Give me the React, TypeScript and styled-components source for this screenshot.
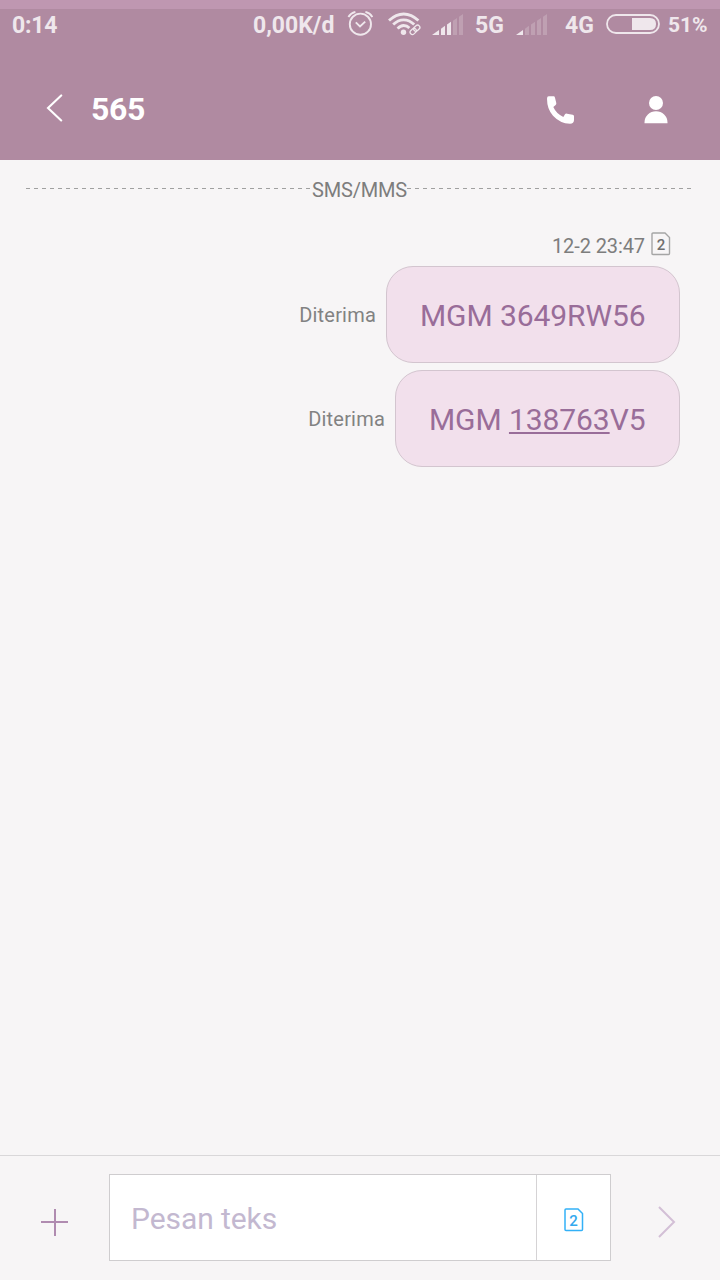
import React from "react";
import styled, { createGlobalStyle } from "styled-components";

const GlobalStyle = createGlobalStyle`
  *, *::before, *::after { box-sizing: border-box; }
  body { margin: 0; background: #f7f5f6; font-family: Roboto, "Liberation Sans", sans-serif; }
  svg { display: block; flex: none; }
`;

const Screen = styled.div`
  width: 720px;
  height: 1280px;
  display: flex;
  flex-direction: column;
  background: #f7f5f6;
  overflow: hidden;
`;

const Header = styled.header`
  height: 160px;
  flex: none;
  background: #b08aa1;
  color: #fff;
`;

const TopStrip = styled.div`
  height: 9px;
  background: #bf97b1;
`;

const StatusBar = styled.div`
  height: 32px;
  display: flex;
  align-items: center;
  color: #efe7ec;
  font-weight: 700;
`;

const StatusText = styled.span<{ $left: number; $width: number; $size?: number; $spacing?: number }>`
  margin-left: ${(p) => p.$left}px;
  width: ${(p) => p.$width}px;
  font-size: ${(p) => p.$size ?? 23}px;
  letter-spacing: ${(p) => p.$spacing ?? 0}px;
  line-height: 30px;
  padding-top: ${(p) => (p.$size ? 0 : 2)}px;
  white-space: nowrap;
  flex: none;
`;

const StatusIcon = styled.span<{ $left: number; $lift?: number }>`
  margin-left: ${(p) => p.$left}px;
  padding-bottom: ${(p) => p.$lift ?? 2}px;
  flex: none;
`;

const TitleBar = styled.div`
  height: 119px;
  display: flex;
  align-items: center;
  padding: 17px 52px 0 46px;
`;

const BackButton = styled.span`
  padding-bottom: 3px;
`;

const Title = styled.h1`
  flex: 1;
  margin: 0 0 0 27px;
  font-size: 32px;
  letter-spacing: -0.3px;
  font-weight: 700;
  line-height: 38px;
`;

const Actions = styled.div`
  display: flex;
  align-items: center;
  gap: 70px;
  padding-top: 1px;
`;

const Conversation = styled.main`
  flex: 1;
  display: flex;
  flex-direction: column;
  padding: 14px 40px 0 26px;
`;

const Divider = styled.div`
  display: flex;
  align-items: center;
  margin-right: -12px;
  height: 28px;
  font-size: 20px;
  line-height: 28px;
  color: #7d7d7d;
`;

const Dashes = styled.span<{ $width: number }>`
  width: ${(p) => p.$width}px;
  height: 1px;
  flex: none;
  background: repeating-linear-gradient(to right, #a0a0a0 0 4px, transparent 4px 8px);
`;

const DividerLabel = styled.span`
  width: 96px;
  text-align: center;
  letter-spacing: -0.2px;
  white-space: nowrap;
  padding: 4px 0 0 1px;
`;

const Stamp = styled.div`
  display: flex;
  justify-content: flex-end;
  align-items: center;
  gap: 6px;
  height: 24px;
  margin: 30px 9px 10px 0;
  font-size: 20px;
  letter-spacing: -0.1px;
  line-height: 24px;
  color: #7d7d7d;
`;

const StampTime = styled.span`
  padding-top: 4px;
`;

const MessageRow = styled.div`
  display: flex;
  justify-content: flex-end;
  align-items: center;
  margin-bottom: 7px;
`;

const Delivery = styled.span`
  font-size: 20px;
  letter-spacing: 0.2px;
  color: #828282;
  margin-right: 10px;
  padding-top: 1px;
`;

const Bubble = styled.div<{ $width: number }>`
  width: ${(p) => p.$width}px;
  height: 97px;
  border: 1px solid #d3c5cf;
  border-radius: 27px;
  background: #f2e0ec;
  color: #996d99;
  display: flex;
  align-items: center;
  padding: 2px 0 0 33px;
  font-size: 30px;
  letter-spacing: -0.08px;
  white-space: pre;
`;

const NumberLink = styled.span`
  text-decoration: underline;
  text-decoration-thickness: 2px;
  text-underline-offset: 2px;
  text-decoration-skip-ink: none;
`;

const Composer = styled.footer`
  height: 125px;
  flex: none;
  display: flex;
  align-items: flex-start;
  border-top: 1px solid #d9d7d9;
  padding: 18px 44px 0 41px;
`;

const PlainButton = styled.button`
  border: 0;
  padding: 0;
  background: none;
  color: inherit;
  display: block;
`;

const AddButton = styled(PlainButton)`
  margin-top: 35px;
`;

const SendButton = styled(PlainButton)`
  margin: 32px 0 0 auto;
`;

const Field = styled.div`
  width: 502px;
  height: 87px;
  margin-left: 41px;
  display: flex;
  background: #fff;
  border: 1px solid #cfcdcf;
`;

const Placeholder = styled.div`
  flex: 1;
  padding-left: 21px;
  font-size: 30px;
  letter-spacing: -0.08px;
  line-height: 87px;
  color: #c3b8d0;
`;

const SimPicker = styled.div`
  width: 74px;
  border-left: 1px solid #d5d3d5;
  display: flex;
  align-items: center;
  justify-content: center;
  padding-top: 4px;
`;

const SimFrame = styled.span<{ $color: string }>`
  color: ${(p) => p.$color};
  display: grid;
  grid-template-rows: 24px;
  justify-items: center;
  align-items: start;
  width: 20px;
  height: 24px;
  flex: none;
  & > * { grid-area: 1 / 1; }
`;

const SimNumber = styled.span<{ $color: string }>`
  color: ${(p) => p.$color};
  font-size: 15px;
  font-weight: 500;
  letter-spacing: 0;
  line-height: 22px;
  padding-top: 2px;
`;

function SimBadge({ frame, digit, stroke }: { frame: string; digit: string; stroke: number }) {
  return (
    <SimFrame $color={frame}>
      <svg width="20" height="24" viewBox="0 0 20 24" fill="none" stroke="currentColor" strokeWidth={stroke}>
        <path d="M2 1H14L18.5 5.5V21.5Q18.5 22.5 17.5 22.5H2Q1 22.5 1 21.5V2Q1 1 2 1Z" />
      </svg>
      <SimNumber $color={digit}>2</SimNumber>
    </SimFrame>
  );
}

function AlarmIcon() {
  return (
    <svg width="26" height="26" viewBox="0 0 26 26" fill="none" stroke="currentColor" strokeWidth="1.9">
      <circle cx="13.4" cy="13.2" r="10.6" />
      <path d="M1.4 6Q3.8 2 8.4 0.9M25.4 6Q23 2 18.4 0.9" />
      <path d="M8.8 11.4L13 15.4L18.2 10.6" />
    </svg>
  );
}

function WifiIcon() {
  return (
    <svg width="34" height="24" viewBox="0 0 34 24" fill="none" stroke="currentColor" strokeWidth="2.8">
      <path d="M1 8.6Q8 2 15.7 2T30.4 8.6" />
      <path d="M5.2 12.6Q10 7.8 15.7 7.8T26.2 12.6" />
      <path d="M9.6 16.6Q12.4 13.5 15.7 13.5T21.4 15.9" />
      <circle cx="15.5" cy="20.2" r="2.7" fill="currentColor" stroke="none" />
      <g strokeWidth="1.3" transform="rotate(-43 27 17.8)">
        <rect x="21.2" y="15.5" width="6.8" height="4.6" rx="2.3" />
        <rect x="26" y="15.5" width="6.8" height="4.6" rx="2.3" />
      </g>
    </svg>
  );
}

function SignalIcon({ level }: { level: number }) {
  const bars = [
    "M0 21L7 16V21Z",
    "M9 14.7L13 11.7V21H9Z",
    "M15 10.5L19 7.8V21H15Z",
    "M21 6.8L25 4V21H21Z",
    "M27 2.8L31 0V21H27Z",
  ];
  return (
    <svg width="31" height="21" viewBox="0 0 31 21" fill="currentColor">
      {bars.map((d, i) => (
        <path key={i} d={d} opacity={i < level ? 1 : 0.24} />
      ))}
    </svg>
  );
}

function BatteryIcon() {
  return (
    <svg width="54" height="20" viewBox="0 0 54 20">
      <rect x="1" y="1" width="52" height="18" rx="9" fill="none" stroke="currentColor" strokeWidth="1.8" />
      <path d="M26 4H44Q50 4 50 10T44 16H26Z" fill="currentColor" />
    </svg>
  );
}

function BackIcon() {
  return (
    <svg width="18" height="28" viewBox="0 0 18 28" fill="none" stroke="currentColor" strokeWidth="2.1" strokeLinecap="round">
      <path d="M15.2 1.4L2 14L15.2 26.5" />
    </svg>
  );
}

function PhoneIcon() {
  return (
    <svg width="27" height="28" viewBox="0 0 81 82" fill="currentColor">
      <path d="M5 0H20Q23 0 24 4L28 21Q28 24 26 26L19 32Q27 51 49 62L54 54Q56 51 60 52L77 55Q81 56 81 60V71Q81 82 69 82Q39 81 18 58Q0 38 0 7Q0 0 5 0Z" />
    </svg>
  );
}

function PersonIcon() {
  return (
    <svg width="24" height="28" viewBox="0 0 24 28" fill="currentColor">
      <circle cx="12" cy="7" r="7" />
      <path d="M0.5 27.3V26.5A11.5 11.2 0 0 1 23.5 26.5V27.3Z" />
    </svg>
  );
}

export default function App() {
  return (
    <Screen>
      <GlobalStyle />
      <Header>
        <TopStrip />
        <StatusBar>
          <StatusText $left={12} $width={46} $spacing={-0.2}>0:14</StatusText>
          <StatusText $left={195} $width={82}>0,00K/d</StatusText>
          <StatusIcon $left={12}><AlarmIcon /></StatusIcon>
          <StatusIcon $left={15}><WifiIcon /></StatusIcon>
          <StatusIcon $left={10} $lift={1}><SignalIcon level={3} /></StatusIcon>
          <StatusText $left={12} $width={28}>5G</StatusText>
          <StatusIcon $left={13} $lift={1}><SignalIcon level={1} /></StatusIcon>
          <StatusText $left={18} $width={28}>4G</StatusText>
          <StatusIcon $left={13}><BatteryIcon /></StatusIcon>
          <StatusText $left={8} $width={40} $size={21}>51%</StatusText>
        </StatusBar>
        <TitleBar>
          <BackButton><BackIcon /></BackButton>
          <Title>565</Title>
          <Actions>
            <PhoneIcon />
            <PersonIcon />
          </Actions>
        </TitleBar>
      </Header>

      <Conversation>
        <Divider>
          <Dashes $width={285} />
          <DividerLabel>SMS/MMS</DividerLabel>
          <Dashes $width={284} />
        </Divider>
        <Stamp>
          <StampTime>12-2 23:47</StampTime>
          <SimBadge frame="#a5a5a5" digit="#6f6f6f" stroke={1.4} />
        </Stamp>
        <MessageRow>
          <Delivery>Diterima</Delivery>
          <Bubble $width={294}>MGM 3649RW56</Bubble>
        </MessageRow>
        <MessageRow>
          <Delivery>Diterima</Delivery>
          <Bubble $width={285}>MGM <NumberLink>138763</NumberLink>V5</Bubble>
        </MessageRow>
      </Conversation>

      <Composer>
        <AddButton aria-label="Tambah">
          <svg width="27" height="27" viewBox="0 0 27 27" stroke="#b08bb0" strokeWidth="2">
            <path d="M0 13H27M14 0V27" />
          </svg>
        </AddButton>
        <Field>
          <Placeholder>Pesan teks</Placeholder>
          <SimPicker>
            <SimBadge frame="#33b1f7" digit="#33a9ee" stroke={1.5} />
          </SimPicker>
        </Field>
        <SendButton aria-label="Kirim">
          <svg width="18" height="32" viewBox="0 0 18 32" fill="none" stroke="#d3bfd6" strokeWidth="2">
            <path d="M1 1L16 16L1 31" />
          </svg>
        </SendButton>
      </Composer>
    </Screen>
  );
}
